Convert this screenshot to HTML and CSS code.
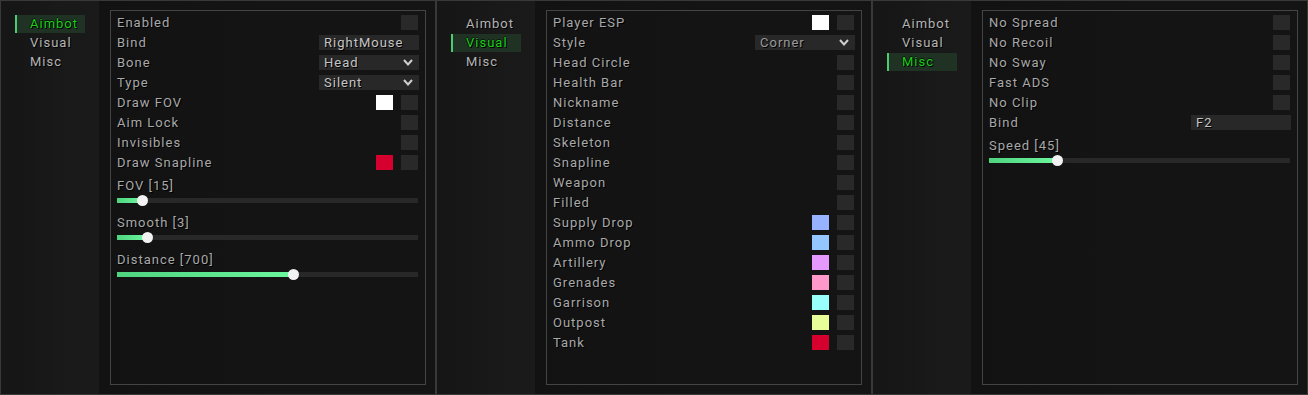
FILE: index.html
```html
<!DOCTYPE html>
<html lang="en">
  <head>
    <meta charset="utf-8" />
    <title>Menu</title>
    <link rel="stylesheet" href="styles.css">
  </head>
  <body>
    <div class="menus">

      <!-- ====== AIMBOT ====== -->
      <section class="menu">
        <nav class="tabs">
          <div class="tab active">Aimbot</div>
          <div class="tab">Visual</div>
          <div class="tab">Misc</div>
        </nav>
        <div class="content">
          <div class="box">
            <div class="row"><span class="label">Enabled</span><span class="check"></span></div>
            <div class="row"><span class="label">Bind</span><span class="input">RightMouse</span></div>
            <div class="row"><span class="label">Bone</span>
              <span class="input combo">Head<svg class="chev" width="10" height="7" viewBox="0 0 10 7"><polyline points="1,1 5,5.5 9,1" /></svg></span></div>
            <div class="row"><span class="label">Type</span>
              <span class="input combo">Silent<svg class="chev" width="10" height="7" viewBox="0 0 10 7"><polyline points="1,1 5,5.5 9,1" /></svg></span></div>
            <div class="row"><span class="label">Draw FOV</span><span class="swatch" style="background:#ffffff"></span><span class="check"></span></div>
            <div class="row"><span class="label">Aim Lock</span><span class="check"></span></div>
            <div class="row"><span class="label">Invisibles</span><span class="check"></span></div>
            <div class="row"><span class="label">Draw Snapline</span><span class="swatch" style="background:#d5002e"></span><span class="check"></span></div>
            <div class="slider">
              <div class="label">FOV [15]</div>
              <div class="track"><div class="fill" style="width:8.2%"></div></div>
            </div>
            <div class="slider">
              <div class="label">Smooth [3]</div>
              <div class="track"><div class="fill" style="width:9.9%"></div></div>
            </div>
            <div class="slider">
              <div class="label">Distance [700]</div>
              <div class="track"><div class="fill" style="width:58.6%"></div></div>
            </div>
          </div>
        </div>
      </section>

      <!-- ====== VISUAL ====== -->
      <section class="menu">
        <nav class="tabs">
          <div class="tab">Aimbot</div>
          <div class="tab active">Visual</div>
          <div class="tab">Misc</div>
        </nav>
        <div class="content">
          <div class="box">
            <div class="row"><span class="label">Player ESP</span><span class="swatch" style="background:#ffffff"></span><span class="check"></span></div>
            <div class="row"><span class="label">Style</span>
              <span class="input combo dim">Corner<svg class="chev" width="10" height="7" viewBox="0 0 10 7"><polyline points="1,1 5,5.5 9,1" /></svg></span></div>
            <div class="row"><span class="label">Head Circle</span><span class="check"></span></div>
            <div class="row"><span class="label">Health Bar</span><span class="check"></span></div>
            <div class="row"><span class="label">Nickname</span><span class="check"></span></div>
            <div class="row"><span class="label">Distance</span><span class="check"></span></div>
            <div class="row"><span class="label">Skeleton</span><span class="check"></span></div>
            <div class="row"><span class="label">Snapline</span><span class="check"></span></div>
            <div class="row"><span class="label">Weapon</span><span class="check"></span></div>
            <div class="row"><span class="label">Filled</span><span class="check"></span></div>
            <div class="row"><span class="label">Supply Drop</span><span class="swatch" style="background:#97b2ff"></span><span class="check"></span></div>
            <div class="row"><span class="label">Ammo Drop</span><span class="swatch" style="background:#94c7ff"></span><span class="check"></span></div>
            <div class="row"><span class="label">Artillery</span><span class="swatch" style="background:#e699fc"></span><span class="check"></span></div>
            <div class="row"><span class="label">Grenades</span><span class="swatch" style="background:#ff99cc"></span><span class="check"></span></div>
            <div class="row"><span class="label">Garrison</span><span class="swatch" style="background:#99fffc"></span><span class="check"></span></div>
            <div class="row"><span class="label">Outpost</span><span class="swatch" style="background:#e8ff99"></span><span class="check"></span></div>
            <div class="row"><span class="label">Tank</span><span class="swatch" style="background:#d5002e"></span><span class="check"></span></div>
          </div>
        </div>
      </section>

      <!-- ====== MISC ====== -->
      <section class="menu">
        <nav class="tabs">
          <div class="tab">Aimbot</div>
          <div class="tab">Visual</div>
          <div class="tab active">Misc</div>
        </nav>
        <div class="content">
          <div class="box">
            <div class="row"><span class="label">No Spread</span><span class="check"></span></div>
            <div class="row"><span class="label">No Recoil</span><span class="check"></span></div>
            <div class="row"><span class="label">No Sway</span><span class="check"></span></div>
            <div class="row"><span class="label">Fast ADS</span><span class="check"></span></div>
            <div class="row"><span class="label">No Clip</span><span class="check"></span></div>
            <div class="row"><span class="label">Bind</span><span class="input">F2</span></div>
            <div class="slider">
              <div class="label">Speed [45]</div>
              <div class="track"><div class="fill" style="width:22.6%"></div></div>
            </div>
          </div>
        </div>
      </section>

    </div>
  </body>
</html>
```

FILE: styles.css
```css
body {
  margin: 0;
  background-color: #141414;
  font-family: Roboto, "Liberation Sans", sans-serif;
  font-size: 13px;
  letter-spacing: 1px;
  color: #a8a8a8;
}

.menus {
  display: flex;
}

.menu {
  width: 436px;
  height: 395px;
  box-sizing: border-box;
  border: 1px solid #393939;
  display: flex;
  background: #141414;
}

/* left tab column */
.tabs {
  width: 98px;
  box-sizing: border-box;
  padding: 14px 0 0 14px;
  display: flex;
  flex-direction: column;
  gap: 1px;
  background: linear-gradient(to right, #161616 0%, #171717 30%, #191919 60%, #1a1a1a 100%);
}

.tab {
  width: 70px;
  height: 18px;
  line-height: 18px;
  box-sizing: border-box;
  padding-left: 15px;
  color: #b4b4b4;
  text-shadow: 1px 1px 0 #000;
}

.tab.active {
  background: #1f3224;
  border-left: 2px solid #4ccc70;
  padding-left: 13px;
  color: #1fcc1f;
  text-shadow: 1px 1px 0 #000, -1px 0 0 #061806, 0 -1px 0 #061806;
}

/* right side */
.content {
  flex: 1;
  padding: 9px 9px 9px 11px;
  display: flex;
  background: linear-gradient(to right, #121212 0%, #131313 20%, #141414 50%, #141414 100%);
}

.box {
  flex: 1;
  border: 1px solid #444444;
  padding: 4px 6px 0 6px;
  display: flex;
  flex-direction: column;
  gap: 5px;
}

.row {
  height: 15px;
  display: flex;
  align-items: center;
}

.label {
  flex: 1;
  line-height: 15px;
  white-space: nowrap;
  text-shadow: 1px 1px 0 #000;
}

.check {
  width: 17px;
  height: 15px;
  margin-right: 1px;
  background: #292929;
}

.swatch {
  width: 17px;
  height: 15px;
  margin-right: 8px;
}

.input {
  width: 100px;
  height: 15px;
  line-height: 15px;
  box-sizing: border-box;
  padding: 0 6px 0 5px;
  background: #282828;
  color: #c4c4c4;
  text-shadow: 1px 1px 0 #000;
  display: flex;
  align-items: center;
}

.input.dim {
  color: #9a9a9a;
}

.combo {
  justify-content: space-between;
}

.chev polyline {
  fill: none;
  stroke: #cfcfcf;
  stroke-width: 2;
}

/* sliders */
.slider {
  padding-top: 3px;
}

.slider .label {
  display: block;
}

.track {
  position: relative;
  height: 5px;
  margin: 5px 1px 4px 0;
  background: #282828;
}

.fill {
  height: 100%;
  position: relative;
  background: linear-gradient(to right, #4fd37f, #6cf79e);
}

.fill::after {
  content: "";
  position: absolute;
  right: -6px;
  top: -3px;
  width: 11px;
  height: 11px;
  border-radius: 50%;
  background: #f2f2f2;
}
```
